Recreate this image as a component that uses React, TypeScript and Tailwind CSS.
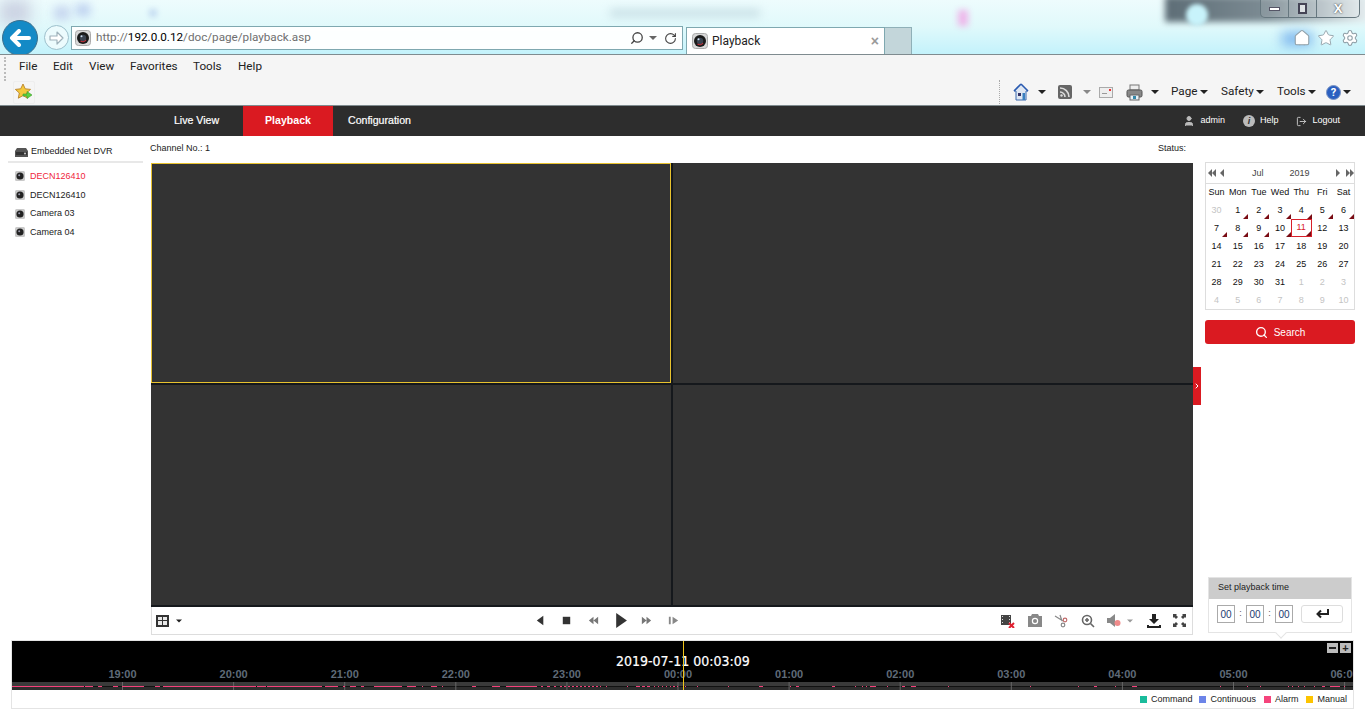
import { Home, Settings, Star, RotateCw, Search, User, LogOut, ChevronRight } from "lucide-react";

const sans = "font-['Liberation_Sans',Arial,sans-serif]";
const segoe = "font-['Roboto',sans-serif]";

function Caret({ className = "" }: { className?: string }) {
  return <span className={"inline-block w-0 h-0 border-x-[4px] border-x-transparent border-t-[4px] border-t-[#222] " + className} />;
}

function Lens({ size = 16 }: { size?: number }) {
  return (
    <svg width={size} height={size} viewBox="0 0 16 16" className="shrink-0">
      <rect x="0.5" y="0.5" width="15" height="15" rx="3" fill="#d8d8d8" stroke="#aaa" />
      <circle cx="8" cy="8" r="6" fill="#1a1a1a" />
      <circle cx="8" cy="8" r="3.2" fill="#3a4350" />
      <path d="M5.5 11 A4 4 0 0 0 11 10" stroke="#c0303a" strokeWidth="1.2" fill="none" />
      <circle cx="6.5" cy="6.2" r="1" fill="#cfe0f0" />
    </svg>
  );
}

function CamSmall() {
  return (
    <svg width="10" height="10" viewBox="0 0 10 10" className="shrink-0">
      <rect width="10" height="10" rx="1.5" fill="#c9c9c9" />
      <circle cx="5" cy="5" r="3.6" fill="#222" />
      <circle cx="4.2" cy="4.2" r="1" fill="#99a" />
    </svg>
  );
}

function ChromeBand() {
  return (
    <div className="relative h-[54px] shrink-0 overflow-hidden bg-gradient-to-b from-[#eefcfd] via-[#e0f9fb] to-[#c3f2fb]">
      {/* blurred desktop showing through the glass */}
      <div className="absolute left-0 top-0 w-[30px] h-[24px] bg-[#c9cfe0] blur-[8px]" />
      <div className="absolute left-[54px] top-[6px] w-[16px] h-[14px] bg-[#b9c7ea] blur-[5px] opacity-70" />
      <div className="absolute left-[76px] top-[4px] w-[14px] h-[12px] bg-[#a9bdea] blur-[5px] opacity-70" />
      <div className="absolute left-[150px] top-[10px] w-[6px] h-[6px] bg-[#a9c4ea] blur-[3px]" />
      <div className="absolute left-[610px] top-[9px] w-[150px] h-[8px] bg-[#a9c4cf] blur-[5px] opacity-50" />
      <div className="absolute left-[958px] top-[10px] w-[10px] h-[16px] bg-[#eeb6ea] blur-[3px]" />
      <div className="absolute left-[1165px] -top-[4px] w-[205px] h-[26px] bg-gradient-to-r from-[#5d6d76] via-[#7d8c94] to-[#e8f0f2] blur-[3px]" />
      <div className="absolute left-[1186px] top-[4px] w-[22px] h-[22px] rounded-full bg-[#c8f3fb] blur-[2px]" />
      <div className="absolute left-[1282px] top-[32px] w-[30px] h-[14px] bg-[#7fb8ee] blur-[6px]" />

      <div className="absolute right-[5px] top-0 w-[100px] h-[18px] flex items-center rounded-b-[5px] border border-t-0 border-[#66777f] bg-white/10">
        <div className="w-[28px] h-full flex items-center justify-center border-r border-[#66777f]"><span className="w-[11px] h-[4px] bg-white border border-[#556]" /></div>
        <div className="w-[28px] h-full flex items-center justify-center border-r border-[#66777f]"><span className="w-[9px] h-[11px] bg-white/60 border-2 border-[#445]" /></div>
        <div className={"flex-1 text-center text-[13px] leading-none font-bold text-white [text-shadow:0_0_2px_#222] " + sans}>X</div>
      </div>

      <div className="relative flex items-start pt-[20px] pl-[2px] h-full">
        <div className="w-[36px] h-[36px] shrink-0 rounded-full bg-[#148ac6] border border-[#3c6f8c] flex items-center justify-center">
          <svg width="22" height="18" viewBox="0 0 22 18" fill="none" stroke="#fff" strokeWidth="4" strokeLinecap="round" strokeLinejoin="round">
            <path d="M20 9H3M10 2 3 9l7 7" />
          </svg>
        </div>
        <div className="ml-[6px] mt-[5px] w-[25px] h-[25px] shrink-0 rounded-full border border-[#9cc0cc] bg-[#ecfbfd] flex items-center justify-center">
          <svg width="15" height="14" viewBox="0 0 15 14" fill="#fff" stroke="#9fb2bb" strokeWidth="1.2" strokeLinejoin="round">
            <path d="M1 5h7V1l6 6-6 6V9H1z" />
          </svg>
        </div>
        <div className="ml-[2px] mt-[6px] w-[612px] h-[24px] shrink-0 flex items-center bg-white/95 border border-[#7fa8b0] pl-[3px] pr-[5px]">
          <Lens />
          <div className={"ml-[5px] text-[11.700px] text-[#6f6f6f] " + segoe}>http://<span className="text-black">192.0.0.12</span>/doc/page/playback.asp</div>
          <div className="ml-auto flex items-center gap-[5px] text-[#444]">
            <Search size={14} className="-scale-x-100" strokeWidth={2.2} />
            <Caret className="border-t-[#666]" />
            <RotateCw size={13} strokeWidth={2} className="ml-[2px]" />
          </div>
        </div>
        <div className="ml-[3px] mt-[7px] w-[199px] h-[27px] shrink-0 flex items-center bg-white border border-b-0 border-[#7fa8b0] pl-[5px] pr-[5px]">
          <Lens />
          <span className={"ml-[4px] text-[12px] text-[#222] " + segoe}>Playback</span>
          <span className={"ml-auto text-[14px] font-bold text-[#9a9a9a] " + sans}>×</span>
        </div>
        <div className="mt-[7px] w-[27px] h-[27px] shrink-0 bg-[#c3d6da] border-r border-t border-[#8fb0b8]" />
        <div className="ml-auto mr-[6px] mt-[9px] flex items-center gap-[6px] text-[#8e9ea6]">
          <Home size={18} fill="#fff" strokeWidth={1.4} />
          <Star size={18} fill="#fff" strokeWidth={1.2} />
          <Settings size={18} fill="#fff" strokeWidth={1.4} />
        </div>
      </div>
    </div>
  );
}

function MenuBar() {
  const items: [string, string][] = [["File", "w-[34px]"], ["Edit", "w-[36px]"], ["View", "w-[41px]"], ["Favorites", "w-[63px]"], ["Tools", "w-[45px]"], ["Help", "w-[40px]"]];
  return (
    <div className={"h-[52px] shrink-0 bg-[#f5f5f5] border-y border-[#7f8b8f] relative " + segoe}>
      <div className="absolute left-[4px] top-[2px] h-[24px] border-l-2 border-dotted border-[#bbb]" />
      <div className="flex h-[24px] items-center pl-[19px] text-[11.700px] text-[#222]">
        {items.map(([t, w]) => <span key={t} className={w}>{t}</span>)}
      </div>
      <div className="flex h-[26px] items-center pl-[13px]">
        <div className="w-[22px] h-[23px] flex items-center justify-center rounded-[2px] border border-[#eee]">
          <svg width="18" height="18" viewBox="0 0 18 18">
            <path d="M8 1l2.2 4.8 5.3.6-3.9 3.6 1 5.2L8 12.6 3.3 15.200l1-5.200L.4 6.400l5.300-.6z" fill="#f4c93c" stroke="#b9822a" strokeWidth="0.9" />
            <path d="M8 11h4V8.500l5 3.500-5 3.500V13H8z" fill="#5bd13f" stroke="#3d9a2a" strokeWidth="0.6" />
          </svg>
        </div>
        <div className="ml-auto h-[25px] flex items-center pr-[14px] text-[11.700px] text-[#222]">
          <div className="h-[24px] border-l border-dotted border-[#aaa] mr-[13px]" />
          <svg width="16" height="18" viewBox="0 0 16 18">
            <path d="M8 1 1 8h2v9h10V8h2z" fill="#dfe7f2" stroke="#3a6ab0" />
            <path d="M8 1 1 8M8 1l7 7" stroke="#2a5ab0" strokeWidth="1.6" fill="none" />
            <rect x="5" y="10" width="3" height="3" fill="#336" />
            <rect x="9.500" y="10" width="2.500" height="7" fill="#3a80c0" />
          </svg>
          <Caret className="ml-[9px]" />
          <div className="ml-[12px] w-[14px] h-[14px] rounded-[2px] bg-[#666] flex items-end p-[2px]">
            <svg width="10" height="10" viewBox="0 0 10 10" fill="none" stroke="#ddd" strokeWidth="1.6">
              <path d="M0 1a9 9 0 0 1 9 9M0 5a5 5 0 0 1 5 5" />
              <circle cx="1.500" cy="8.500" r="1.200" fill="#ddd" stroke="none" />
            </svg>
          </div>
          <Caret className="ml-[11px] border-t-[#888]" />
          <div className="ml-[8px] w-[14px] h-[11px] bg-[#eee] border border-[#aaa] relative">
            <span className="absolute right-[1px] top-[1px] w-[2px] h-[2px] bg-[#e33]" />
            <span className="absolute left-[2px] top-[5px] w-[5px] h-px bg-[#999]" />
          </div>
          <svg width="17" height="17" viewBox="0 0 17 17" className="ml-[13px]">
            <rect x="4" y="1" width="9" height="5" fill="#eee" stroke="#777" />
            <rect x="1" y="6" width="15" height="7" rx="1.500" fill="#888" stroke="#555" />
            <rect x="4" y="11" width="9" height="5" fill="#e8f2f8" stroke="#666" />
            <rect x="7" y="12" width="3" height="3" fill="#38a" />
          </svg>
          <Caret className="ml-[8px]" />
          <span className="ml-[12px] w-[27px]">Page</span>
          <Caret className="ml-[2px]" />
          <span className="ml-[13px] w-[33px]">Safety</span>
          <Caret className="ml-[2px]" />
          <span className="ml-[13px] w-[29px]">Tools</span>
          <Caret className="ml-[2px]" />
          <div className="ml-[10px] w-[15px] h-[15px] rounded-full bg-[#2a5fc0] border border-[#7c95c4] flex items-center justify-center text-[11px] font-bold leading-none text-white">?</div>
          <Caret className="ml-[2px]" />
        </div>
      </div>
    </div>
  );
}

function NavBar() {
  return (
    <div className={"h-[30px] shrink-0 bg-[#2d2d2d] flex items-stretch text-white pl-[150px] " + sans}>
      <div className="w-[93px] flex items-center justify-center text-[10.6px] [-webkit-text-stroke:0.2px_#fff]">Live View</div>
      <div className="w-[90px] bg-[#da1a21] flex items-center justify-center text-[10.6px] font-bold">Playback</div>
      <div className="w-[93px] flex items-center justify-center text-[10.6px] [-webkit-text-stroke:0.2px_#fff]">Configuration</div>
      <div className="ml-auto flex items-center pr-[25px] text-[9px]">
        <User size={12} fill="#bbb" stroke="#bbb" />
        <span className="ml-[5px]">admin</span>
        <div className="ml-[18px] w-[12px] h-[12px] rounded-full bg-[#bbb] text-[#2d2d2d] text-[9px] font-bold italic flex items-center justify-center leading-none">i</div>
        <span className="ml-[5px]">Help</span>
        <LogOut size={11} stroke="#ccc" className="ml-[18px]" />
        <span className="ml-[5px]">Logout</span>
      </div>
    </div>
  );
}

function Sidebar() {
  const cams = [["DECN126410", "text-[#f0263c]"], ["DECN126410", "text-[#222]"], ["Camera 03", "text-[#222]"], ["Camera 04", "text-[#222]"]];
  return (
    <div className={"w-[150px] shrink-0 pl-[8px] pr-[7px] text-[9px] " + sans}>
      <div className="h-[27px] flex items-center pl-[7px] border-b-2 border-[#e8e8e8] pt-[7px] text-[#222]">
        <svg width="13" height="9" viewBox="0 0 13 9"><path d="M2 0h9l2 3v6H0V3z" fill="#555" /><rect x="1" y="4" width="11" height="3" fill="#333" /><circle cx="10" cy="5.500" r="1" fill="#ccc" /></svg>
        <span className="ml-[3px]">Embedded Net DVR</span>
      </div>
      <div className="pt-[4px] pl-[7px]">
        {cams.map(([name, color], i) => (
          <div key={i} className={"h-[18.700px] flex items-center " + color}>
            <CamSmall />
            <span className="ml-[5px] pt-px">{name}</span>
          </div>
        ))}
      </div>
    </div>
  );
}

function Ctrl({ d, size = 14, fill = "#555" }: { d: string; size?: number; fill?: string }) {
  return (
    <div className="w-[26.600px] flex justify-center">
      <svg width={size} height={size} viewBox="0 0 14 14" fill={fill}><path d={d} /></svg>
    </div>
  );
}

function VideoArea() {
  return (
    <div className="flex-1 min-w-0 relative">
      <div className={"h-[27px] flex items-center justify-between pl-0 pr-[7px] pt-[1px] pb-[3px] text-[9px] text-[#222] " + sans}>
        <span>Channel No.: 1</span>
        <span>Status:</span>
      </div>
      <div className="ml-[1px] h-[442px] bg-[#15181c] grid grid-cols-[520px_1fr] grid-rows-[220px_1fr] gap-[2px]">
        <div className="bg-[#333] border border-[#e8c22e]" />
        <div className="bg-[#333]" />
        <div className="bg-[#333]" />
        <div className="bg-[#333]" />
      </div>
      <div className="ml-[1px] h-[2px] bg-[#15181c]" />
      <div className="ml-[1px] h-[28px] flex items-center border-x border-b border-[#ddd] text-[#444]">
        <div className="ml-[4px] w-[13px] h-[12px] border-2 border-[#333] grid grid-cols-2 grid-rows-2 gap-px bg-[#333]">
          <span className="bg-[#e8e8e8]" /><span className="bg-[#e8e8e8]" /><span className="bg-[#e8e8e8]" /><span className="bg-[#e8e8e8]" />
        </div>
        <Caret className="ml-[6px] scale-75" />
        <div className="ml-[344px] flex items-center">
          <Ctrl d="M10 2v10L3 7z" size={13} fill="#333" />
          <Ctrl d="M3 3h8v8H3z" size={13} fill="#333" />
          <Ctrl d="M7 3v8L2 7zM12 3v8L7 7z" size={13} fill="#777" />
          <Ctrl d="M3 0v14l10-7z" size={15} fill="#333" />
          <Ctrl d="M2 3v8l5-4zM7 3v8l5-4z" size={13} fill="#777" />
          <Ctrl d="M2 3h2v8H2zM6 3v8l6-4z" size={13} fill="#888" />
        </div>
        <div className="ml-auto mr-[6px] flex items-center gap-[12.500px]">
          <svg width="14" height="14" viewBox="0 0 14 14"><path d="M0 1h10v10H0z" fill="#444" /><path d="M1 2h1v1H1zM1 5h1v1H1zM1 8h1v1H1zM8 2h1v1H8zM8 5h1v1H8zM8 8h1v1H8z" fill="#ddd" /><path d="M8 9l5 5M13 9l-5 5" stroke="#e02030" strokeWidth="2" /></svg>
          <svg width="14" height="13" viewBox="0 0 14 13"><path d="M0 2h3l1-2h6l1 2h3v11H0z" fill="#888" /><circle cx="7" cy="7" r="3.200" fill="#fff" /><circle cx="7" cy="7" r="2" fill="#888" /></svg>
          <svg width="14" height="14" viewBox="0 0 14 14" fill="none" stroke="#888" strokeWidth="1.200"><path d="M1 2l8 5M6 1l2 6" /><circle cx="11" cy="6" r="1.800" stroke="#c06a6a" /><circle cx="9" cy="11" r="1.800" /></svg>
          <svg width="14" height="14" viewBox="0 0 14 14" fill="none" stroke="#666" strokeWidth="1.600"><circle cx="6" cy="6" r="4.500" /><path d="M9.500 9.500 13 13M4 6h4M6 4v4" /></svg>
          <div className="flex items-center">
            <svg width="14" height="13" viewBox="0 0 14 13"><path d="M0 4h3l5-4v13l-5-4H0z" fill="#888" /><circle cx="10.500" cy="9" r="3" fill="#ef8a8a" /></svg>
            <Caret className="ml-[5px] border-t-[#999] scale-75" />
          </div>
          <svg width="14" height="14" viewBox="0 0 14 14" fill="#222"><path d="M5 0h4v5h3L7 10 2 5h3zM0 11h2v1h10v-1h2v3H0z" /></svg>
          <svg width="13" height="13" viewBox="0 0 13 13" fill="#444"><path d="M0 0h4L3 1l2 2-2 2-2-2-1 1zM13 0v4l-1-1-2 2-2-2 2-2-1-1zM0 13V9l1 1 2-2 2 2-2 2 1 1zM13 13H9l1-1-2-2 2-2 2 2 1-1z" /></svg>
        </div>
      </div>
      <div className="absolute right-[-8px] top-[231px] w-[8px] h-[38px] bg-[#da1a21] flex items-center justify-center">
        <ChevronRight size={8} stroke="#fff" strokeWidth={3} />
      </div>
    </div>
  );
}

function TriL({ className = "" }: { className?: string }) {
  return <span className={"w-0 h-0 border-y-[4px] border-y-transparent border-r-[4px] border-r-[#666] " + className} />;
}

function TriR({ className = "" }: { className?: string }) {
  return <span className={"w-0 h-0 border-y-[4px] border-y-transparent border-l-[4px] border-l-[#666] " + className} />;
}

function Calendar() {
  const head = ["Sun", "Mon", "Tue", "Wed", "Thu", "Fri", "Sat"];
  const days = [30, 1, 2, 3, 4, 5, 6, 7, 8, 9, 10, 11, 12, 13, 14, 15, 16, 17, 18, 19, 20, 21, 22, 23, 24, 25, 26, 27, 28, 29, 30, 31, 1, 2, 3, 4, 5, 6, 7, 8, 9, 10];
  return (
    <div className={"border border-[#ddd] text-[9px] text-[#111] " + sans}>
      <div className="h-[21px] flex items-center border-b border-[#ddd] text-[#444] pl-[2px]">
        <TriL /><TriL />
        <TriL className="ml-[4px]" />
        <span className="ml-[28px] pt-px">Jul</span>
        <span className="ml-[26px] pt-px">2019</span>
        <TriR className="ml-[26px]" />
        <TriR className="ml-[6px]" /><TriR />
      </div>
      <div className="grid grid-cols-7">
        {head.map((h) => <div key={h} className="h-[17px] pt-px flex items-center justify-center">{h}</div>)}
        {days.map((d, i) => {
          const other = i < 1 || i > 31;
          const rec = i >= 1 && i <= 11;
          return (
            <div key={i} className={"relative h-[18px] flex items-center justify-center " + (other ? "text-[#c4c4c4] " : "") + (i === 11 ? "border border-[#d8202a] text-[#d8202a]" : "pt-px")}>
              {d}
              {rec && <span className="absolute right-0 bottom-0 w-0 h-0 border-b-[5px] border-b-[#7a0c14] border-l-[5px] border-l-transparent" />}
            </div>
          );
        })}
      </div>
    </div>
  );
}

function RightColumn() {
  return (
    <div className="w-[172px] shrink-0 pl-[12px] pr-[10px] pt-[26px] pb-[2px] flex flex-col">
      <Calendar />
      <div className={"mt-[10px] h-[24px] rounded-[3px] bg-[#da1a21] flex items-center justify-center text-white text-[10px] " + sans}>
        <Search size={13} strokeWidth={2.500} />
        <span className="ml-[6px]">Search</span>
      </div>
      <div className={"mt-auto mx-[3px] relative border border-[#e4e4e4] text-[9px] text-[#222] " + sans}>
        <div className="h-[21px] bg-[#ccc] flex items-center pl-[9px] pb-px">Set playback time</div>
        <div className="h-[33px] flex items-start pt-[6px] pl-[8px] text-[#555]">
          {["00", "00", "00"].map((v, i) => (
            <div key={i} className="flex items-center">
              {i > 0 && <span className="w-[11px] text-center">:</span>}
              <span className="w-[18px] h-[18px] border border-[#aaa] flex items-center justify-center text-[10px] text-[#1c3c70]">{v}</span>
            </div>
          ))}
          <div className="ml-[8px] w-[42px] h-[18px] rounded-[3px] border border-[#ddd] flex items-center justify-center">
            <svg width="13" height="10" viewBox="0 0 13 10" fill="none" stroke="#222" strokeWidth="2"><path d="M12 0v5H2M5 1.500 1.500 5 5 8.500" /></svg>
          </div>
        </div>
        <span className="absolute left-[68px] bottom-[-5px] w-[8px] h-[8px] rotate-45 bg-white border-r border-b border-[#e4e4e4]" />
      </div>
    </div>
  );
}

// recording spans on the timeline, in page x coordinates
const spans: [number, number][] = [
  [12, 84], [85, 93], [98, 102], [113, 118], [122, 144], [155, 160], [163, 256], [257, 266], [267, 300], [300, 322], [325, 338], [343, 345], [350, 356], [361, 364], [374, 402], [407, 416], [422, 423], [431, 437], [442, 443], [472, 476], [492, 500], [506, 537],
  [541, 543], [547, 550], [554, 556], [560, 562], [564, 566], [568, 570], [572, 574], [576, 578], [580, 582], [584, 586], [588, 590], [592, 594], [596, 598], [600, 601], [606, 607], [627, 628], [636, 640], [642, 645], [647, 650], [654, 655], [658, 659], [662, 663], [666, 667], [670, 671], [673, 675],
  [677, 678], [685, 686], [697, 698], [728, 729], [759, 763], [790, 791], [796, 799], [832, 835], [855, 856], [862, 863], [866, 867], [870, 876], [887, 888], [902, 905], [911, 916], [948, 949], [1030, 1031], [1078, 1079], [1094, 1097], [1115, 1116], [1132, 1137], [1220, 1221], [1247, 1248], [1260, 1261], [1288, 1289], [1292, 1293], [1298, 1299], [1304, 1305], [1314, 1315], [1322, 1325], [1330, 1340], [1344, 1345],
];

function Timeline() {
  const hours = ["19:00", "20:00", "21:00", "22:00", "23:00", "00:00", "01:00", "02:00", "03:00", "04:00", "05:00", "06:00"];
  const legend = [["Command", "bg-[#1abc9c]", "ml-0"], ["Continuous", "bg-[#6c84e8]", "ml-[7px]"], ["Alarm", "bg-[#f5447c]", "ml-[8px]"], ["Manual", "bg-[#fdc400]", "ml-[8px]"]];
  return (
    <div className={"relative mx-[11px] mt-[5px] h-[69px] border border-[#e4e4e4] w-[1343px] " + sans}>
      <div className="relative h-[49px] bg-black overflow-hidden">
        <div className="absolute left-[604px] top-[10px] text-[14px] text-white [-webkit-text-stroke:0.2px_#fff] font-['DejaVu_Sans_Condensed','Liberation_Sans',sans-serif]">2019-07-11 00:03:09</div>
        <div className="absolute right-[2px] top-[2px] flex gap-[2px]">
          <span className="w-[11px] h-[10px] bg-[#bbb] flex items-center justify-center"><span className="w-[7px] h-[2px] bg-[#222]" /></span>
          <span className="w-[11px] h-[10px] bg-[#bbb] flex items-center justify-center text-[11px] font-bold leading-none text-[#222]">+</span>
        </div>
        <div className="absolute left-[55px] top-[25px] flex text-[11px] font-bold text-[#5f6b78]">
          {hours.map((h) => <span key={h} className="w-[111.100px] text-center">{h}</span>)}
        </div>
        <svg className="absolute left-0 bottom-0" width="1341" height="8" viewBox="0 0 1341 8">
          <rect width="1341" height="4" fill="#3a3a3a" />
          <rect y="4" width="1341" height="4" fill="#2d2d2d" />
          <rect y="4" width="1341" height="1" fill="#111" />
          {hours.map((h, i) => <rect key={h} x={110 + i * 111.1} y="0" width="1" height="8" fill="#666" />)}
          {spans.map(([a, b], i) => <rect key={i} x={a - 12} y="4" width={b - a} height="1" fill="#f5407a" />)}
        </svg>
      </div>
      <div className="absolute left-[671px] top-0 w-px h-[49px] bg-[#f0c419]" />
      <div className="h-[18px] pt-px flex items-center justify-end pr-[6px] text-[9px] text-[#222]">
        {legend.map(([t, c, m]) => (
          <div key={t} className={"flex items-center " + m}>
            <span className={"w-[7px] h-[7px] " + c} />
            <span className="ml-[4px]">{t}</span>
          </div>
        ))}
      </div>
    </div>
  );
}

export default function App() {
  return (
    <div className="w-[1365px] h-[725px] overflow-hidden bg-white flex flex-col">
      <ChromeBand />
      <MenuBar />
      <NavBar />
      <div className="h-[499px] shrink-0 flex">
        <Sidebar />
        <VideoArea />
        <RightColumn />
      </div>
      <Timeline />
    </div>
  );
}
